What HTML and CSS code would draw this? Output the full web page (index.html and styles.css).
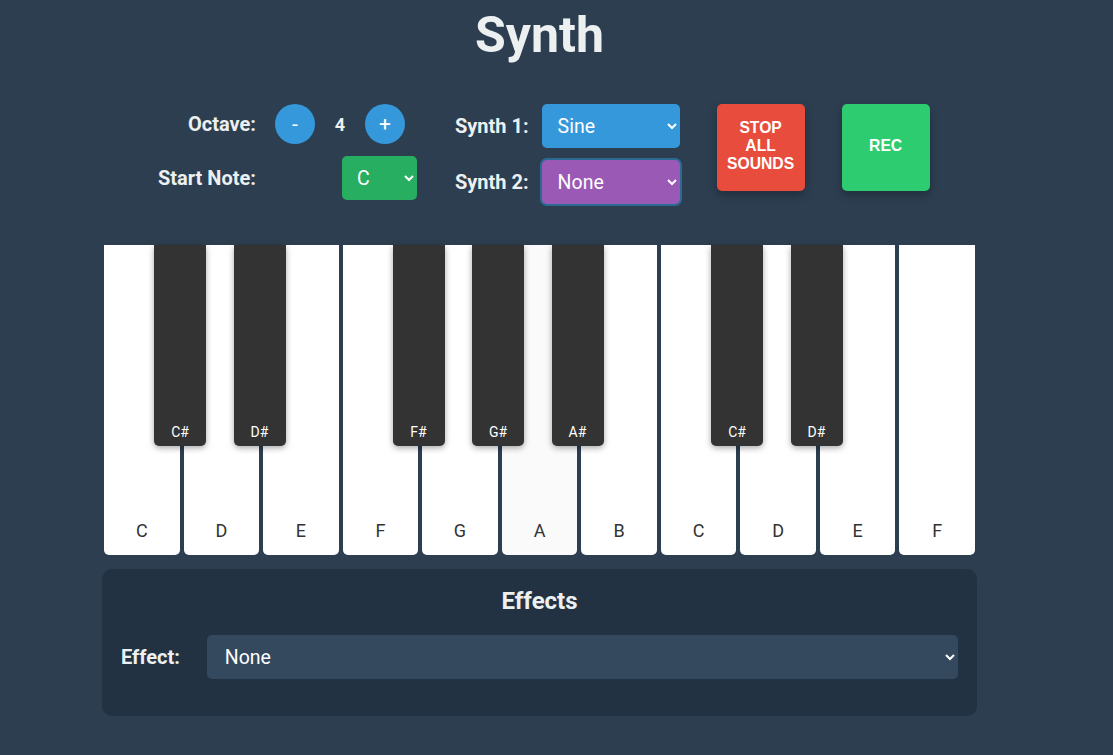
FILE: index.html
```html
<!DOCTYPE html>
<html lang="en">
<head>
<meta charset="utf-8">
<title>Synth</title>
<link rel="stylesheet" href="styles.css">
</head>
<body>
<div class="app">
  <h1 class="title">Synth</h1>

  <div class="controls">
    <div class="group group-octave">
      <span class="label">Octave:</span>
      <div class="octave-ctrl">
        <button class="round-btn">-</button>
        <span class="octave-val">4</span>
        <button class="round-btn">+</button>
      </div>
      <span class="label">Start Note:</span>
      <select class="sel sel-note"><option>C</option></select>
    </div>

    <div class="group group-synth">
      <span class="label">Synth 1:</span>
      <select class="sel sel-synth1"><option>Sine</option></select>
      <span class="label">Synth 2:</span>
      <select class="sel sel-synth2 focused"><option>None</option></select>
    </div>

    <button class="big-btn stop">STOP<br>ALL<br>SOUNDS</button>
    <button class="big-btn rec">REC</button>
  </div>

  <div class="piano">
    <div class="white"><span>C</span></div>
    <div class="white"><span>D</span></div>
    <div class="white"><span>E</span></div>
    <div class="white"><span>F</span></div>
    <div class="white"><span>G</span></div>
    <div class="white active"><span>A</span></div>
    <div class="white"><span>B</span></div>
    <div class="white"><span>C</span></div>
    <div class="white"><span>D</span></div>
    <div class="white"><span>E</span></div>
    <div class="white"><span>F</span></div>

    <div class="black" style="left: 52px"><span>C#</span></div>
    <div class="black" style="left: 131.5px"><span>D#</span></div>
    <div class="black" style="left: 290.5px"><span>F#</span></div>
    <div class="black" style="left: 370px"><span>G#</span></div>
    <div class="black" style="left: 449.5px"><span>A#</span></div>
    <div class="black" style="left: 609px"><span>C#</span></div>
    <div class="black" style="left: 688.5px"><span>D#</span></div>
  </div>

  <div class="effects">
    <h2 class="effects-title">Effects</h2>
    <div class="effect-row">
      <span class="label">Effect:</span>
      <select class="sel sel-effect"><option>None</option></select>
    </div>
  </div>
</div>
</body>
</html>
```

FILE: styles.css
```css
html, body {
  margin: 0;
  padding: 0;
}
body {
  background: #2c3e50;
  color: #ecf0f1;
  font-family: Roboto, "Liberation Sans", Arial, sans-serif;
  height: 755px;
  overflow: hidden;
}
.app {
  width: 875px;
  margin-left: 102px;
  display: flex;
  flex-direction: column;
}
.title {
  margin: 7px 0 0 0;
  text-align: center;
  font-size: 50px;
  font-weight: 700;
  line-height: 56px;
  color: #ecf0f1;
}
.controls {
  display: flex;
  align-items: flex-start;
  margin-top: 41px;
  margin-left: 56px;
}
.label {
  font-weight: 700;
  font-size: 20px;
  color: #ecf0f1;
  white-space: nowrap;
}
.group {
  display: grid;
  align-items: center;
}
.group-octave {
  grid-template-columns: auto auto;
  column-gap: 19px;
  row-gap: 12px;
  grid-template-rows: 40px 44px;
}
.group-octave .label {
  text-align: right;
}
.octave-ctrl {
  display: flex;
  align-items: center;
}
.round-btn {
  width: 40px;
  height: 40px;
  border-radius: 50%;
  border: none;
  background: #3498db;
  color: #fff;
  font-family: Roboto, sans-serif;
  font-size: 21px;
  padding: 0;
  line-height: 40px;
}
.octave-val {
  width: 50px;
  text-align: center;
  font-weight: 700;
  font-size: 18px;
}
.sel {
  height: 44px;
  border: none;
  border-radius: 5px;
  color: #fff;
  font-family: Roboto, sans-serif;
  font-size: 19.5px;
  padding: 0 10px 0 12px;
  outline: none;
}
.sel-note {
  width: 75px;
  margin-left: 67px;
  background: #27ae60;
  padding-left: 11px;
}
.group-synth {
  margin-left: 38px;
  grid-template-columns: auto 138px;
  column-gap: 13px;
  row-gap: 12px;
  grid-template-rows: 44px 44px;
}
.sel-synth1 {
  background: #3498db;
}
.sel-synth2 {
  background: #9b59b6;
}
.sel-synth2.focused {
  box-shadow: 0 0 0 2px #2b6a93;
}
.big-btn {
  width: 88px;
  height: 87px;
  border: none;
  border-radius: 5px;
  color: #fff;
  font-family: "Liberation Sans", Arial, sans-serif;
  font-weight: 700;
  font-size: 15.7px;
  line-height: 18px;
  padding: 0 0 4px 0;
  box-shadow: 0 4px 8px rgba(0, 0, 0, 0.25);
}
.stop {
  background: #e74c3c;
  margin-left: 37px;
}
.rec {
  background: #2ecc71;
  margin-left: 37px;
}
.piano {
  position: relative;
  display: flex;
  height: 310px;
  margin-top: 41px;
}
.white {
  flex: 1;
  margin: 0 2px;
  background: #fff;
  border-radius: 0 0 5px 5px;
  display: flex;
  align-items: flex-end;
  justify-content: center;
  color: #333;
  font-size: 18px;
  padding-bottom: 14px;
  box-sizing: border-box;
}
.white.active {
  background: #fafafa;
}
.black {
  position: absolute;
  top: 0;
  width: 52px;
  height: 201px;
  background: #333;
  border-radius: 0 0 5px 5px;
  box-shadow: 0 2px 6px rgba(0, 0, 0, 0.35);
  display: flex;
  align-items: flex-end;
  justify-content: center;
  color: #fff;
  font-size: 14px;
  padding-bottom: 6px;
  box-sizing: border-box;
}
.effects {
  margin-top: 14px;
  background: #233242;
  border-radius: 10px;
  height: 147px;
  box-sizing: border-box;
  padding: 17px 19px 0 19px;
}
.effects-title {
  margin: 0;
  text-align: center;
  font-size: 24px;
  font-weight: 700;
  line-height: 30px;
}
.effect-row {
  display: flex;
  align-items: center;
  margin-top: 19px;
}
.sel-effect {
  flex: 1;
  margin-left: 27px;
  background: #34495e;
  padding-left: 14px;
}
```
